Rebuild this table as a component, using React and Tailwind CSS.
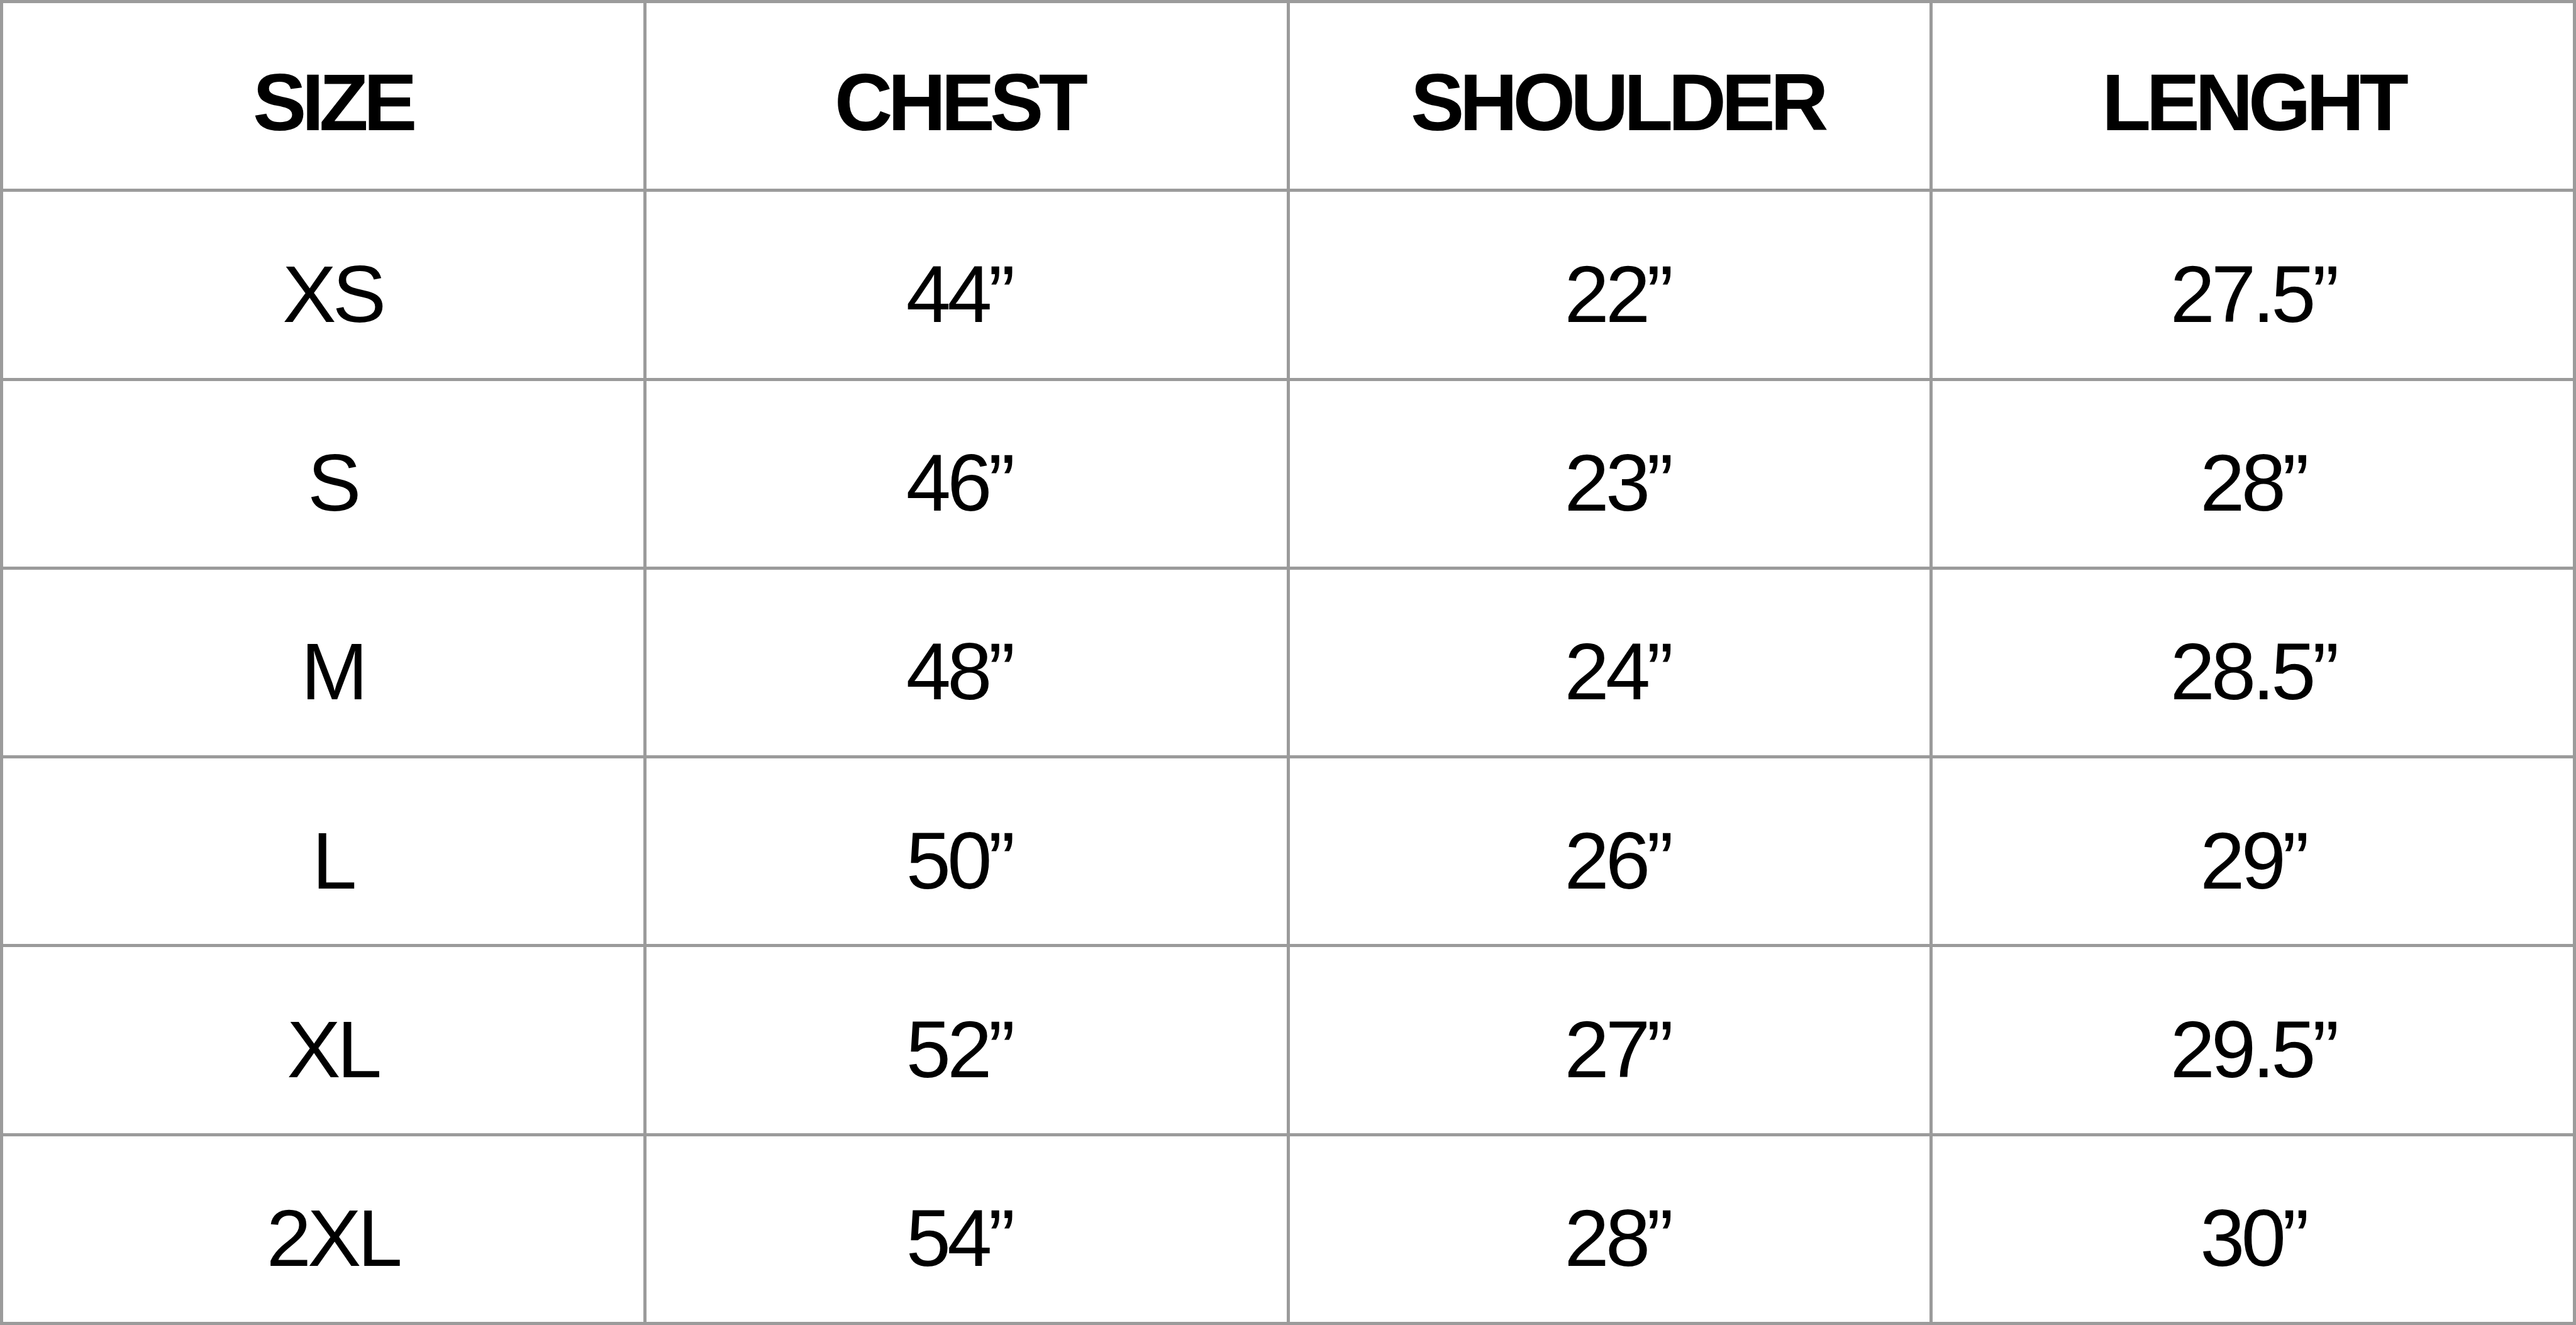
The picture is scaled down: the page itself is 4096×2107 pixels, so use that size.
import React from "react";

const headers = ["SIZE", "CHEST", "SHOULDER", "LENGHT"];

const rows = [
  ["XS", "44”", "22”", "27.5”"],
  ["S", "46”", "23”", "28”"],
  ["M", "48”", "24”", "28.5”"],
  ["L", "50”", "26”", "29”"],
  ["XL", "52”", "27”", "29.5”"],
  ["2XL", "54”", "28”", "30”"],
];

// small per-column nudge so the text sits where it does in the chart
const colPad = ["pl-[30px]", "pr-[24px]", "pl-[24px]", ""];

const Cell = ({ children, col, head }) => (
  <div
    className={`flex items-center justify-center bg-white leading-none text-black ${
      head
        ? "pt-[21px] text-[128px] font-bold tracking-[-0.06em]"
        : "pt-[30px] text-[128px] font-normal tracking-[-0.045em]"
    } ${colPad[col]}`}
  >
    {children}
  </div>
);

export default function App() {
  return (
    <div
      className="grid h-[2107px] w-[4096px] grid-cols-4 grid-rows-7 gap-[5px] bg-[#9b9b9b] p-[5px]"
      style={{ fontFamily: '"Liberation Sans", Arial, sans-serif' }}
    >
      {headers.map((h, i) => (
        <Cell key={h} col={i} head>
          {h}
        </Cell>
      ))}
      {rows.map((r, ri) =>
        r.map((v, ci) => (
          <Cell key={ri + "-" + ci} col={ci}>
            {v}
          </Cell>
        ))
      )}
    </div>
  );
}
